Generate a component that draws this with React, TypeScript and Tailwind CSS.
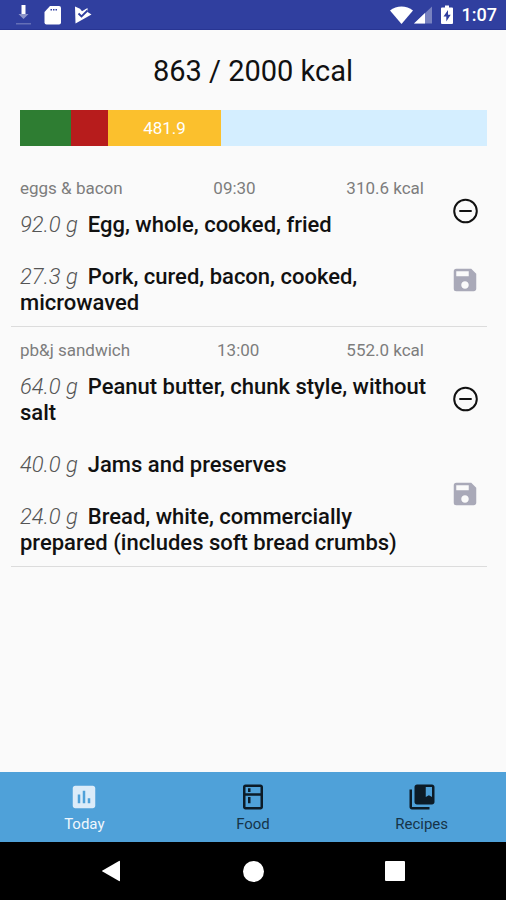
import { MdInsertChart, MdCollectionsBookmark, MdOutlineKitchen, MdSave } from "react-icons/md";

type Food = { grams: string; name: string };
type Meal = { title: string; time: string; kcal: string; foods: Food[] };

const meals: Meal[] = [
  {
    title: "eggs & bacon",
    time: "09:30",
    kcal: "310.6 kcal",
    foods: [
      { grams: "92.0 g", name: "Egg, whole, cooked, fried" },
      { grams: "27.3 g", name: "Pork, cured, bacon, cooked, microwaved" },
    ],
  },
  {
    title: "pb&j sandwich",
    time: "13:00",
    kcal: "552.0 kcal",
    foods: [
      { grams: "64.0 g", name: "Peanut butter, chunk style, without salt" },
      { grams: "40.0 g", name: "Jams and preserves" },
      { grams: "24.0 g", name: "Bread, white, commercially prepared (includes soft bread crumbs)" },
    ],
  },
];

const macros = [
  { color: "bg-[#2e7d32]", share: 10.9, label: "" },
  { color: "bg-[#b71c1c]", share: 8, label: "" },
  { color: "bg-[#fbc02d]", share: 24.1, label: "481.9" },
];

const tabs = [
  { label: "Today", Icon: MdInsertChart, iconColor: "text-[#dcecf9]", textColor: "text-[#f0f7fd]" },
  { label: "Food", Icon: MdOutlineKitchen, iconColor: "text-[#0c1b27]", textColor: "text-[#163449]" },
  { label: "Recipes", Icon: MdCollectionsBookmark, iconColor: "text-[#0c1b27]", textColor: "text-[#163449]" },
];

function StatusBar() {
  return (
    <header className="flex h-[30px] items-center justify-between border-b border-[#283593] bg-[#303f9f] pr-[9px] pl-4 text-white">
      <div className="flex items-center gap-[13px]">
        <svg className="h-5 w-[15px]" viewBox="0 0 15 20" fill="currentColor">
          <path d="M5.500 0h4v9h-4z" />
          <path d="M2.500 9h10l-5 5z" opacity=".45" />
          <path d="M0 18h15v1.500H0z" opacity=".25" />
        </svg>
        <svg className="h-5 w-[17px]" viewBox="0 0 17 20">
          <path d="M6 1h9a2 2 0 0 1 2 2v14.500a2 2 0 0 1-2 2H2.500a2 2 0 0 1-2-2V7z" fill="currentColor" />
          <path d="M6.500 4h1.500v1.500H6.500zM9 4h1.500v1.500H9zM11.500 4H13v1.500h-1.500z" fill="#303f9f" />
        </svg>
        <svg className="h-5 w-[18px]" viewBox="0 0 18 20">
          <path d="M1 1.500l5 2.200 2 2.500L13.500 3v4L17.500 9.500 1.500 18.500z" fill="currentColor" />
          <path d="M4.500 8.500l3 3 6-6" fill="none" stroke="#303f9f" strokeWidth="1.800" />
        </svg>
      </div>
      <div className="flex items-center">
        <svg className="h-5 w-[23px]" viewBox="0 0 23 20" fill="currentColor">
          <path d="M0 5.500C6.500 0 16.500 0 23 5.500L11.500 19z" />
        </svg>
        <svg className="ml-px h-5 w-[18px]" viewBox="0 0 18 20" fill="currentColor">
          <path d="M18 1.500v17H0z" opacity=".35" />
          <path d="M11 8.100v10.400H0z" />
        </svg>
        <svg className="ml-[9px] h-5 w-3" viewBox="0 0 12 20">
          <path d="M4 0.500h4V2.500h3a1 1 0 0 1 1 1V18a1 1 0 0 1-1 1H1a1 1 0 0 1-1-1V3.500a1 1 0 0 1 1-1h3z" fill="currentColor" />
          <path d="M7 5L2.500 11.500H5.300V16.500L9.700 9.700H7z" fill="#303f9f" />
        </svg>
        <span className="ml-[9px] text-[18px] leading-5 font-medium">1:07</span>
      </div>
    </header>
  );
}

function MacroBar() {
  return (
    <div className="mt-[21px] mr-[19px] ml-5 flex h-9 bg-[#d4eeff]">
      {macros.map((macro) => (
        <div
          key={macro.color}
          className={`flex items-center justify-center text-[17px] leading-5 text-white ${macro.color}`}
          style={{ width: `${macro.share}%` }}
        >
          {macro.label}
        </div>
      ))}
    </div>
  );
}

function RemoveIcon() {
  return (
    <svg className="size-[30px]" viewBox="0 0 30 30" fill="none" stroke="currentColor" strokeWidth="2">
      <circle cx="15.500" cy="15" r="11.300" />
      <path d="M9.300 15h12.400" />
    </svg>
  );
}

function MealRow({ meal }: { meal: Meal }) {
  return (
    <li className="flex border-b border-[#dcdcdc] pl-[9px]">
      <div className="min-w-0 flex-1 pt-[13px] pb-[10px]">
        <div className="flex justify-between pr-[10px] text-[17px] leading-5 text-[#7d7d7d]">
          <span>{meal.title}</span>
          <span>{meal.time}</span>
          <span>{meal.kcal}</span>
        </div>
        <ul className="mt-[14px] flex flex-col gap-[26px]">
          {meal.foods.map((food) => (
            <li key={food.name} className="text-[22px] leading-[26px] font-medium text-[#111]">
              <span className="mr-[10px] font-light text-[#555] italic">{food.grams}</span>
              {food.name}
            </li>
          ))}
        </ul>
      </div>
      <div className="flex w-[53px] flex-col items-end justify-evenly">
        <button type="button" aria-label="Remove meal" className="flex h-[47px] w-11 items-center justify-center text-[#111]">
          <RemoveIcon />
        </button>
        <button type="button" aria-label="Save meal" className="flex h-[47px] w-11 items-center justify-center text-[#a9a9b8]">
          <MdSave size={30} />
        </button>
      </div>
    </li>
  );
}

function TabBar() {
  return (
    <nav className="grid grid-cols-3 bg-[#4fa1d9]">
      {tabs.map(({ label, Icon, iconColor, textColor }) => (
        <button key={label} type="button" className="flex flex-col items-center gap-[2px] pt-[10px] pb-2">
          <Icon size={30} className={iconColor} />
          <span className={`text-[15px] leading-5 ${textColor}`}>{label}</span>
        </button>
      ))}
    </nav>
  );
}

function SystemBar() {
  return (
    <footer className="flex h-[58px] justify-center bg-black text-white">
      <button type="button" aria-label="Back" className="flex w-[142px] items-center justify-center">
        <svg className="h-[22px] w-[18px]" viewBox="0 0 18 22" fill="currentColor">
          <path d="M17 1a.7.7 0 0 1 1 .6v18.800a.7.7 0 0 1-1 .6L.500 11.600a.7.7 0 0 1 0-1.200z" />
        </svg>
      </button>
      <button type="button" aria-label="Home" className="flex w-[142px] items-center justify-center">
        <span className="size-[21px] rounded-full bg-white" />
      </button>
      <button type="button" aria-label="Overview" className="flex w-[142px] items-center justify-center">
        <span className="size-5 rounded-[1px] bg-white" />
      </button>
    </footer>
  );
}

export default function App() {
  return (
    <div className="flex min-h-screen flex-col bg-[#fafafa] font-['Roboto',sans-serif]">
      <StatusBar />
      <main className="flex-1">
        <h1 className="pt-[23px] text-center text-[29px] leading-9 text-[#111]">863 / 2000 kcal</h1>
        <MacroBar />
        <ul className="mt-[19px] mr-[19px] ml-[11px]">
          {meals.map((meal) => (
            <MealRow key={meal.title} meal={meal} />
          ))}
        </ul>
      </main>
      <TabBar />
      <SystemBar />
    </div>
  );
}
